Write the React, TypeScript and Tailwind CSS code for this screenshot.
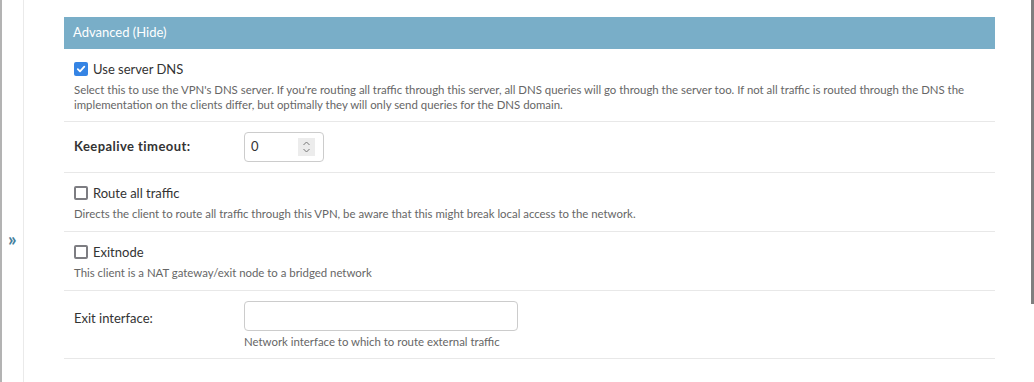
import React from 'react';

const font = 'font-["Lato","Noto_Sans",sans-serif]';

function CheckBox({ checked }: { checked?: boolean }) {
  if (checked) {
    return (
      <span className="inline-flex h-[14px] w-[14px] items-center justify-center rounded-[2px] bg-[#3584e4]">
        <svg width="10" height="10" viewBox="0 0 10 10">
          <path d="M1.8 5.2 L4 7.3 L8.3 2.6" fill="none" stroke="white" strokeWidth="1.8" strokeLinecap="round" strokeLinejoin="round" />
        </svg>
      </span>
    );
  }
  return <span className="inline-block h-[14px] w-[14px] rounded-[2px] border-2 border-[#7d7d82] bg-white" />;
}

function CheckRow({ label, help, checked, tall }: { label: string; help: React.ReactNode; checked?: boolean; tall?: boolean }) {
  return (
    <div className={`border-b border-[#e8e8e8] px-[10px] pt-[13px] ${tall ? 'pb-[10px]' : 'pb-[9px]'}`}>
      <label className="flex items-center gap-[5px] text-[13px] leading-[14px] text-[#333]">
        <CheckBox checked={checked} />
        <span>{label}</span>
      </label>
      <div className="mt-[6px] text-[11.4px] leading-[15px] text-[#666]">{help}</div>
    </div>
  );
}

export default function App() {
  return (
    <div className={`relative flex h-[382px] w-full overflow-hidden bg-white ${font}`}>
      {/* collapsed nav sidebar toggle */}
      <div className="flex w-[24px] shrink-0 items-center border-l-2 border-r border-l-[#b3b3b3] border-r-[#eaeaea] pl-[6px]">
        <span className="mt-[94px] text-[19px] font-bold leading-none text-[#447e9b]">»</span>
      </div>

      <div className="flex-1 pl-[40px] pr-[39px] pt-[17px]">
        <fieldset className="w-[931px]">
          <h2 className="flex h-[32px] items-center bg-[#79aec8] px-[9px] text-[13px] text-white">Advanced (Hide)</h2>

          <CheckRow
            checked
            label="Use server DNS"
            help={
              <>
                Select this to use the VPN's DNS server. If you're routing all traffic through this server, all DNS queries will go through the server too. If not all traffic is routed through the DNS the
                <br />
                implementation on the clients differ, but optimally they will only send queries for the DNS domain.
              </>
            }
          />

          <div className="flex items-center border-b border-[#e8e8e8] p-[10px]">
            <label className="w-[170px] text-[13px] font-bold tracking-[0.45px] text-[#333]">Keepalive timeout:</label>
            <div className="flex h-[30px] w-[80px] items-center justify-between rounded-[4px] border border-[#ccc] pl-[6px] pr-[8px]">
              <span className="text-[13px] text-[#333]">0</span>
              <span className="flex h-[18px] w-[17px] flex-col items-center justify-center bg-[#ececec]">
                <svg width="9" height="14" viewBox="0 0 9 14">
                  <path d="M1.5 5 L4.5 2 L7.5 5 M1.5 9 L4.5 12 L7.5 9" fill="none" stroke="#777" strokeWidth="1" />
                </svg>
              </span>
            </div>
          </div>

          <CheckRow
            tall
            label="Route all traffic"
            help="Directs the client to route all traffic through this VPN, be aware that this might break local access to the network."
          />

          <CheckRow tall label="Exitnode" help="This client is a NAT gateway/exit node to a bridged network" />

          <div className="flex border-b border-[#e8e8e8] px-[10px] pt-[10px] pb-[9px]">
            <label className="mt-[8px] w-[170px] text-[13px] text-[#333]">Exit interface:</label>
            <div>
              <div className="h-[30px] w-[274px] rounded-[4px] border border-[#ccc]" />
              <div className="mt-[3px] text-[11.4px] leading-[15px] text-[#666]">Network interface to which to route external traffic</div>
            </div>
          </div>
        </fieldset>
      </div>

      {/* scrollbar thumb */}
      <div className="absolute right-0 top-0 h-[304px] w-[3px] bg-[#7f7f7f]" />
    </div>
  );
}
